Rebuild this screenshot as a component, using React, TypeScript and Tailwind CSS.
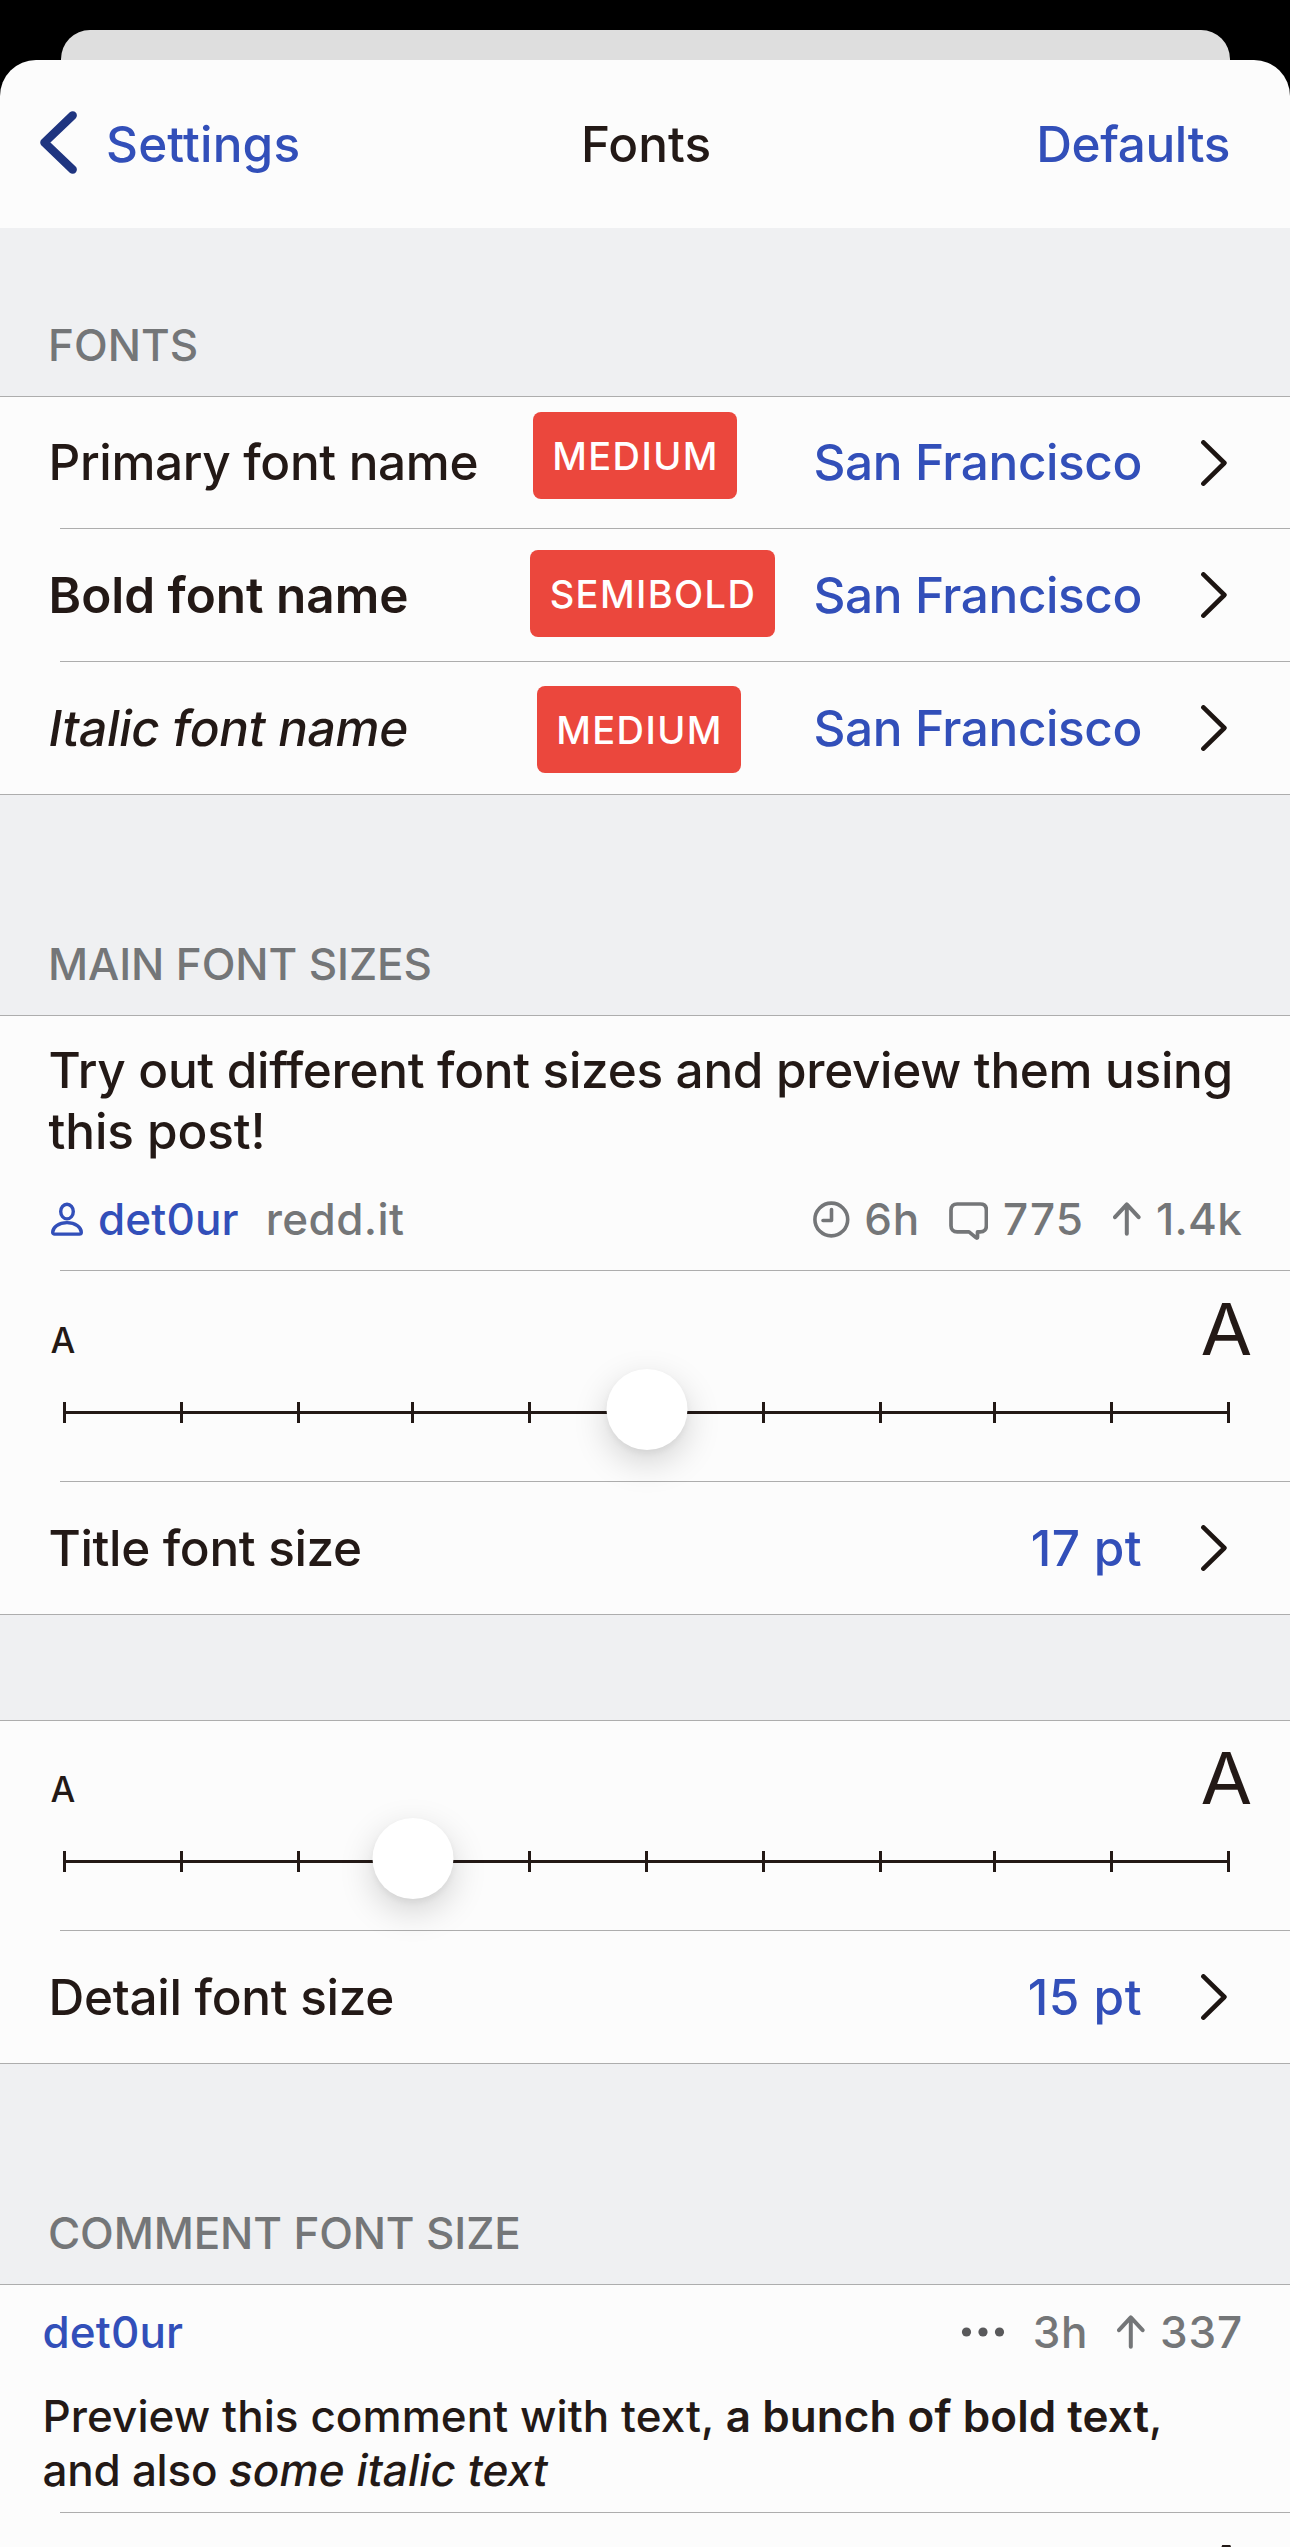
import type { ReactNode } from 'react';

const TICKS = [63, 180, 297, 411, 528, 645, 762, 879, 993, 1110, 1227];

function Hairline({ inset = false }: { inset?: boolean }) {
  return <div className={inset ? 'ml-[60px] h-px shrink-0 bg-[#adadad]' : 'h-px shrink-0 bg-[#adadad]'} />;
}

function Chevron() {
  return (
    <svg className="h-[46px] w-[26px] shrink-0" viewBox="0 0 26 46" fill="none" stroke="#1d1512" strokeWidth="4.6" strokeLinecap="round" strokeLinejoin="round">
      <path d="M2.4 2.4 23.4 23 2.4 43.6" />
    </svg>
  );
}

function UpArrow() {
  return (
    <svg className="h-[34px] w-[28px] shrink-0" viewBox="0 0 28 34" fill="none" stroke="#747678" strokeWidth="4" strokeLinecap="round" strokeLinejoin="round">
      <path d="M13.8 31.8V2.6M2 15.2 13.8 2.4l11.8 12.8" />
    </svg>
  );
}

/* Slanted roman letterforms rather than the cursive italic cut. */
function Slanted({ className, children }: { className: string; children: ReactNode }) {
  return <em className={`inline-block origin-[0_68%] -skew-x-[9.5deg] not-italic ${className}`}>{children}</em>;
}

function SectionLabel({ className, children }: { className: string; children: ReactNode }) {
  return (
    <h2 className={`flex shrink-0 items-end bg-[#eff0f2] pb-[25px] pl-12 text-[44px] leading-[52px] font-[450] text-[#747678] ${className}`}>
      {children}
    </h2>
  );
}

function Row({ className, label, value, children }: { className: string; label: ReactNode; value: ReactNode; children?: ReactNode }) {
  return (
    <div className={`relative flex shrink-0 items-center justify-between pr-[63px] pl-[48.5px] text-[49.5px] font-medium ${className}`}>
      {label}
      {children}
      <div className="flex items-center gap-[59px] text-[#324fb9]">
        {value}
        <Chevron />
      </div>
    </div>
  );
}

function Badge({ className, children }: { className: string; children: ReactNode }) {
  return (
    <span className={`absolute flex h-[87px] items-center justify-center rounded-[8px] bg-[#eb473d] pt-[2px] pl-px text-[38px] font-medium tracking-[1.4px] text-white ${className}`}>
      {children}
    </span>
  );
}

function FontSlider({ className, step }: { className: string; step: number }) {
  return (
    <div className={`flex shrink-0 flex-col justify-end ${className}`}>
      <div className="flex items-start justify-between pr-[38px] pl-[50.5px]">
        <span className="pt-[11px] text-[35px] leading-[74px] font-[450]">A</span>
        <span className="origin-right scale-x-105 text-[71.5px] leading-[74px] font-normal">A</span>
      </div>
      <div className="relative mt-[25px] mb-[58px] h-[21px]">
        <div className="absolute top-[9px] right-[60px] left-[63px] h-[3px] bg-[#231916]" />
        {TICKS.map((x) => (
          <div key={x} className="absolute top-0 h-[21px] w-[3px] bg-[#231916]" style={{ left: x }} />
        ))}
        <div
          className="absolute -top-[33px] size-[81px] -translate-x-1/2 rounded-full bg-white shadow-[0_12px_34px_rgba(0,0,0,0.17),0_3px_6px_rgba(0,0,0,0.05)]"
          style={{ left: TICKS[step] + 1.5 }}
        />
      </div>
    </div>
  );
}

export default function App() {
  return (
    <div className="flex h-[2547px] w-[1290px] flex-col overflow-hidden bg-black font-['Inter',sans-serif] text-[#231916]">
      <div className="mx-[60.5px] mt-[30px] h-[30px] shrink-0 rounded-t-[29px] bg-[#dedede]" />

      <div className="flex min-h-0 flex-1 flex-col overflow-hidden rounded-t-[36px] bg-[#fcfcfc]">
        <header className="grid h-[168px] shrink-0 grid-cols-3 items-center text-[49.5px] font-medium text-[#324fb9]">
          <div className="flex items-center pl-10">
            <svg className="mr-[28px] mb-[3px] h-[63px] w-[38px]" viewBox="0 0 38 63" fill="none" stroke="#1f3580" strokeWidth="8.4" strokeLinecap="round" strokeLinejoin="round">
              <path d="M32.7 4.4 4.4 31.5 32.7 58.6" />
            </svg>
            <span className="tracking-[0.16px]">Settings</span>
          </div>
          <h1 className="pl-[2px] text-center text-[#231916]">Fonts</h1>
          <span className="pr-[60px] text-right tracking-[-0.38px]">Defaults</span>
        </header>

        <SectionLabel className="h-[168px]">FONTS</SectionLabel>
        <Hairline />
        <Row
          className="h-[131px]"
          label={<span className="tracking-[-0.36px]">Primary font name</span>}
          value={<span className="tracking-[-0.42px]">San Francisco</span>}
        >
          <Badge className="top-[15px] left-[533px] w-[204px]">MEDIUM</Badge>
        </Row>
        <Hairline inset />
        <Row
          className="h-[132px]"
          label={<span className="font-semibold">Bold font name</span>}
          value={<span className="tracking-[-0.42px]">San Francisco</span>}
        >
          <Badge className="top-[21px] left-[530px] w-[245px]">SEMIBOLD</Badge>
        </Row>
        <Hairline inset />
        <Row
          className="h-[132px]"
          label={<Slanted className="-ml-[2px] tracking-[-0.3px]">Italic font name</Slanted>}
          value={<span className="tracking-[-0.42px]">San Francisco</span>}
        >
          <Badge className="top-[24px] left-[537px] w-[204px]">MEDIUM</Badge>
        </Row>
        <Hairline />

        <SectionLabel className="h-[220px] tracking-[-0.1px]">MAIN FONT SIZES</SectionLabel>
        <Hairline />
        <div className="h-[254px] shrink-0 pt-[24px] pl-[48.5px]">
          <p className="text-[49.5px] leading-[61px] font-medium tracking-[-0.32px]">
            Try out different font sizes and preview them using
            <br />
            <span className="tracking-[-0.1px]">this post!</span>
          </p>
          <div className="mt-[31px] flex h-[52px] items-center pr-[48px] text-[44px] leading-[52px] font-[450] text-[#747678]">
            <svg className="mr-[14px] ml-[2.5px] h-[34px] w-[33px]" viewBox="0 0 33 34" fill="none" stroke="#324fb9" strokeWidth="3.4" strokeLinejoin="round">
              <ellipse cx="16" cy="9.6" rx="6.3" ry="7.3" />
              <path d="M16 20.6c8.4 0 14.3 4.6 14.3 9.6 0 1.2-.7 1.9-2 1.9H3.7c-1.3 0-2-.7-2-1.9 0-5 5.9-9.6 14.3-9.6Z" />
            </svg>
            <span className="font-medium tracking-[0.14px] text-[#324fb9]">det0ur</span>
            <span className="ml-[27px] tracking-[0.4px]">redd.it</span>
            <svg className="mr-[14px] ml-auto size-[37px]" viewBox="0 0 37 37" fill="none" stroke="#747678" strokeWidth="3.6" strokeLinecap="round" strokeLinejoin="round">
              <circle cx="18.3" cy="18.5" r="16.4" />
              <path d="M18.5 8.5v11H10" />
            </svg>
            <span className="tracking-[0.7px]">6h</span>
            <svg className="mt-[4px] mr-[15px] ml-[29px] h-[38px] w-[39px]" viewBox="0 0 39 38" fill="none" stroke="#747678" strokeWidth="3.7" strokeLinejoin="round">
              <path d="M8.2 2h23c3.9 0 6.2 2.3 6.2 6.2v15.5c0 3.9-2.3 6.2-6.2 6.2h-2.7v5.3c0 .9-.8 1.1-1.5.5L20 29.9H8.2C4.3 29.9 2 27.6 2 23.7V8.2C2 4.3 4.3 2 8.2 2Z" />
            </svg>
            <span className="mr-[29px] tracking-[1.1px]">775</span>
            <UpArrow />
            <span className="ml-[15px] tracking-[0.2px]">1.4k</span>
          </div>
        </div>
        <Hairline inset />
        <FontSlider className="h-[210px]" step={5} />
        <Hairline inset />
        <Row
          className="h-[132px]"
          label={<span className="tracking-[-0.36px]">Title font size</span>}
          value={<span className="tracking-[0.35px]">17 pt</span>}
        />
        <Hairline />

        <div className="h-[105px] shrink-0 bg-[#eff0f2]" />
        <Hairline />
        <FontSlider className="h-[209px]" step={3} />
        <Hairline inset />
        <Row
          className="h-[132px]"
          label={<span className="tracking-[-0.3px]">Detail font size</span>}
          value={<span className="tracking-[0.47px]">15 pt</span>}
        />
        <Hairline />

        <SectionLabel className="h-[220px] tracking-[-0.15px]">COMMENT FONT SIZE</SectionLabel>
        <Hairline />
        <div className="h-[227px] shrink-0 pt-[21px] pl-[42.5px]">
          <div className="flex h-[52px] items-center pr-[47px] text-[44px] leading-[52px] font-[450] text-[#747678]">
            <span className="font-medium tracking-[0.14px] text-[#324fb9]">det0ur</span>
            <svg className="mr-[28px] ml-auto h-[10px] w-[44px]" viewBox="0 0 44 10" fill="#59595b">
              <circle cx="5.5" cy="5" r="4.6" />
              <circle cx="22" cy="5" r="4.6" />
              <circle cx="38.5" cy="5" r="4.6" />
            </svg>
            <span className="mr-[29px] tracking-[0.6px]">3h</span>
            <UpArrow />
            <span className="ml-[15px] tracking-[0.9px]">337</span>
          </div>
          <p className="mt-[32px] text-[44px] leading-[53.6px] font-medium tracking-[0.06px]">
            Preview this comment with text, <strong className="font-semibold">a bunch of bold text</strong>,
            <br />
            <span className="tracking-[-0.25px]">and also </span>
            <Slanted className="-ml-px tracking-[0.1px]">some italic text</Slanted>
          </p>
        </div>
        <Hairline inset />
        <FontSlider className="h-[210px]" step={5} />
      </div>
    </div>
  );
}
